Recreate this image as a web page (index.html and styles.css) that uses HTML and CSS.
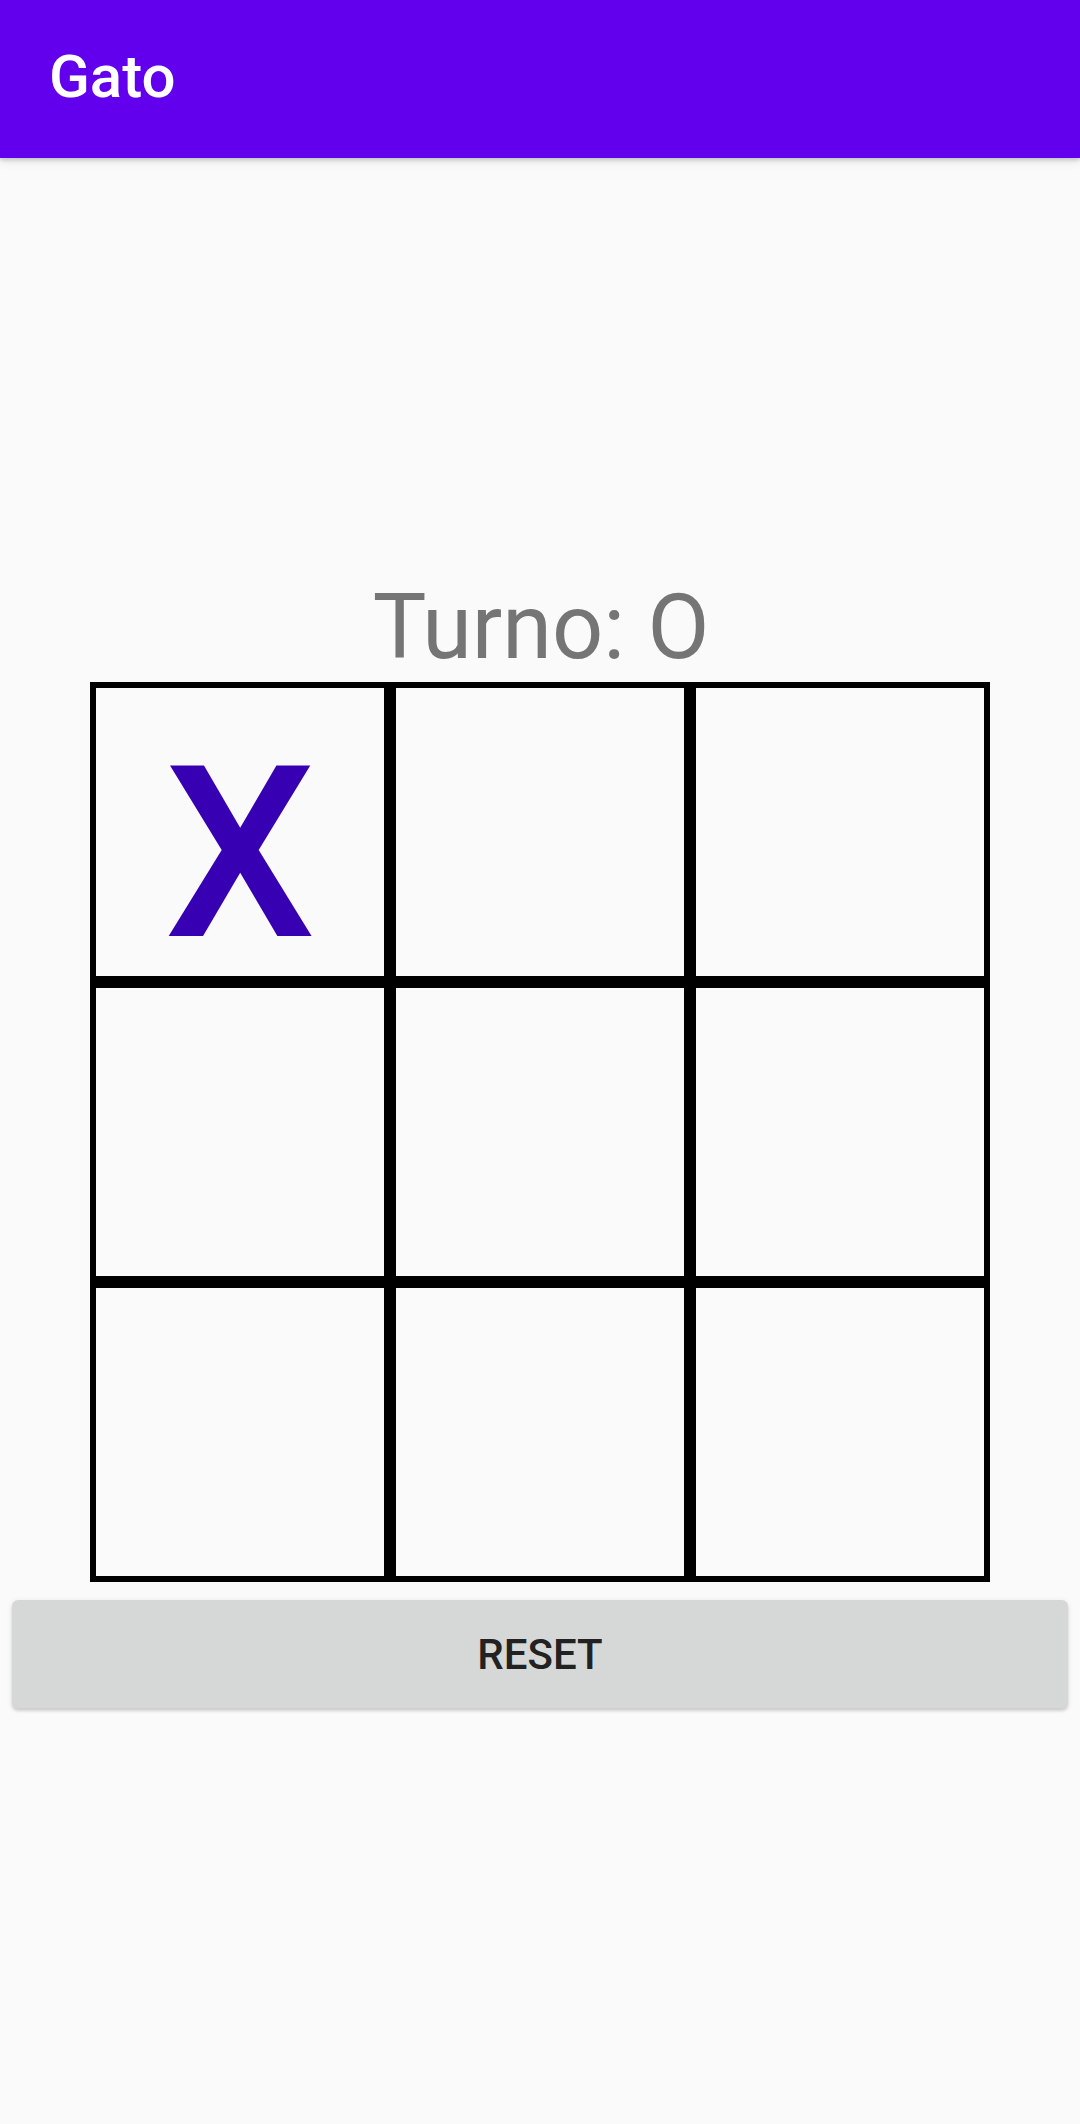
FILE: index.html
```html
<!DOCTYPE html>
<html>
<head>
<meta charset="utf-8">
<link rel="stylesheet" href="styles.css">
</head>
<body>
<header class="appbar"><span class="title">Gato</span></header>
<main class="content">
  <div class="turn">Turno: O</div>
  <div class="board">
    <div class="cell"><span class="mark">X</span></div>
    <div class="cell"></div>
    <div class="cell"></div>
    <div class="cell"></div>
    <div class="cell"></div>
    <div class="cell"></div>
    <div class="cell"></div>
    <div class="cell"></div>
    <div class="cell"></div>
  </div>
  <div class="btn-wrap"><button class="reset">RESET</button></div>
</main>
</body>
</html>
```
FILE: styles.css
```css
html, body {
  margin: 0;
  padding: 0;
}
body {
  width: 1080px;
  height: 2124px;
  background: #fafafa;
  font-family: Roboto, "Noto Sans", sans-serif;
  overflow: hidden;
}
.appbar {
  position: relative;
  z-index: 2;
  height: 158px;
  background: #6200ee;
  display: flex;
  align-items: center;
  padding-left: 49px;
  box-shadow: 0 2px 4px rgba(0,0,0,0.18), 0 4px 10px rgba(0,0,0,0.08);
}
.title {
  color: #ffffff;
  font-size: 60px;
  font-weight: 500;
  line-height: 1;
  margin-top: -4px;
}
.content {
  display: flex;
  flex-direction: column;
  align-items: center;
  padding-top: 416px;
}
.turn {
  font-size: 90px;
  color: #757575;
  line-height: 108px;
  height: 108px;
  margin-right: -2px;
}
.board {
  display: grid;
  grid-template-columns: repeat(3, 300px);
  grid-template-rows: repeat(3, 300px);
}
.cell {
  box-sizing: border-box;
  border: 6px solid #000;
  height: 300px;
  text-align: center;
}
.mark {
  display: block;
  padding-top: 48px;
  font-size: 240px;
  font-weight: 500;
  line-height: 236px;
  color: #3700b3;
}
.btn-wrap {
  align-self: stretch;
  padding: 18px 12px;
}
.reset {
  display: block;
  width: 100%;
  height: 108px;
  border: none;
  border-radius: 6px;
  background: #d6d7d7;
  color: #222222;
  font-family: Roboto, "Noto Sans", sans-serif;
  font-size: 42px;
  font-weight: 500;
  letter-spacing: 0;
  box-shadow: 0 3px 3px rgba(0,0,0,0.14), 0 1px 6px rgba(0,0,0,0.08);
  padding: 0;
}
```
